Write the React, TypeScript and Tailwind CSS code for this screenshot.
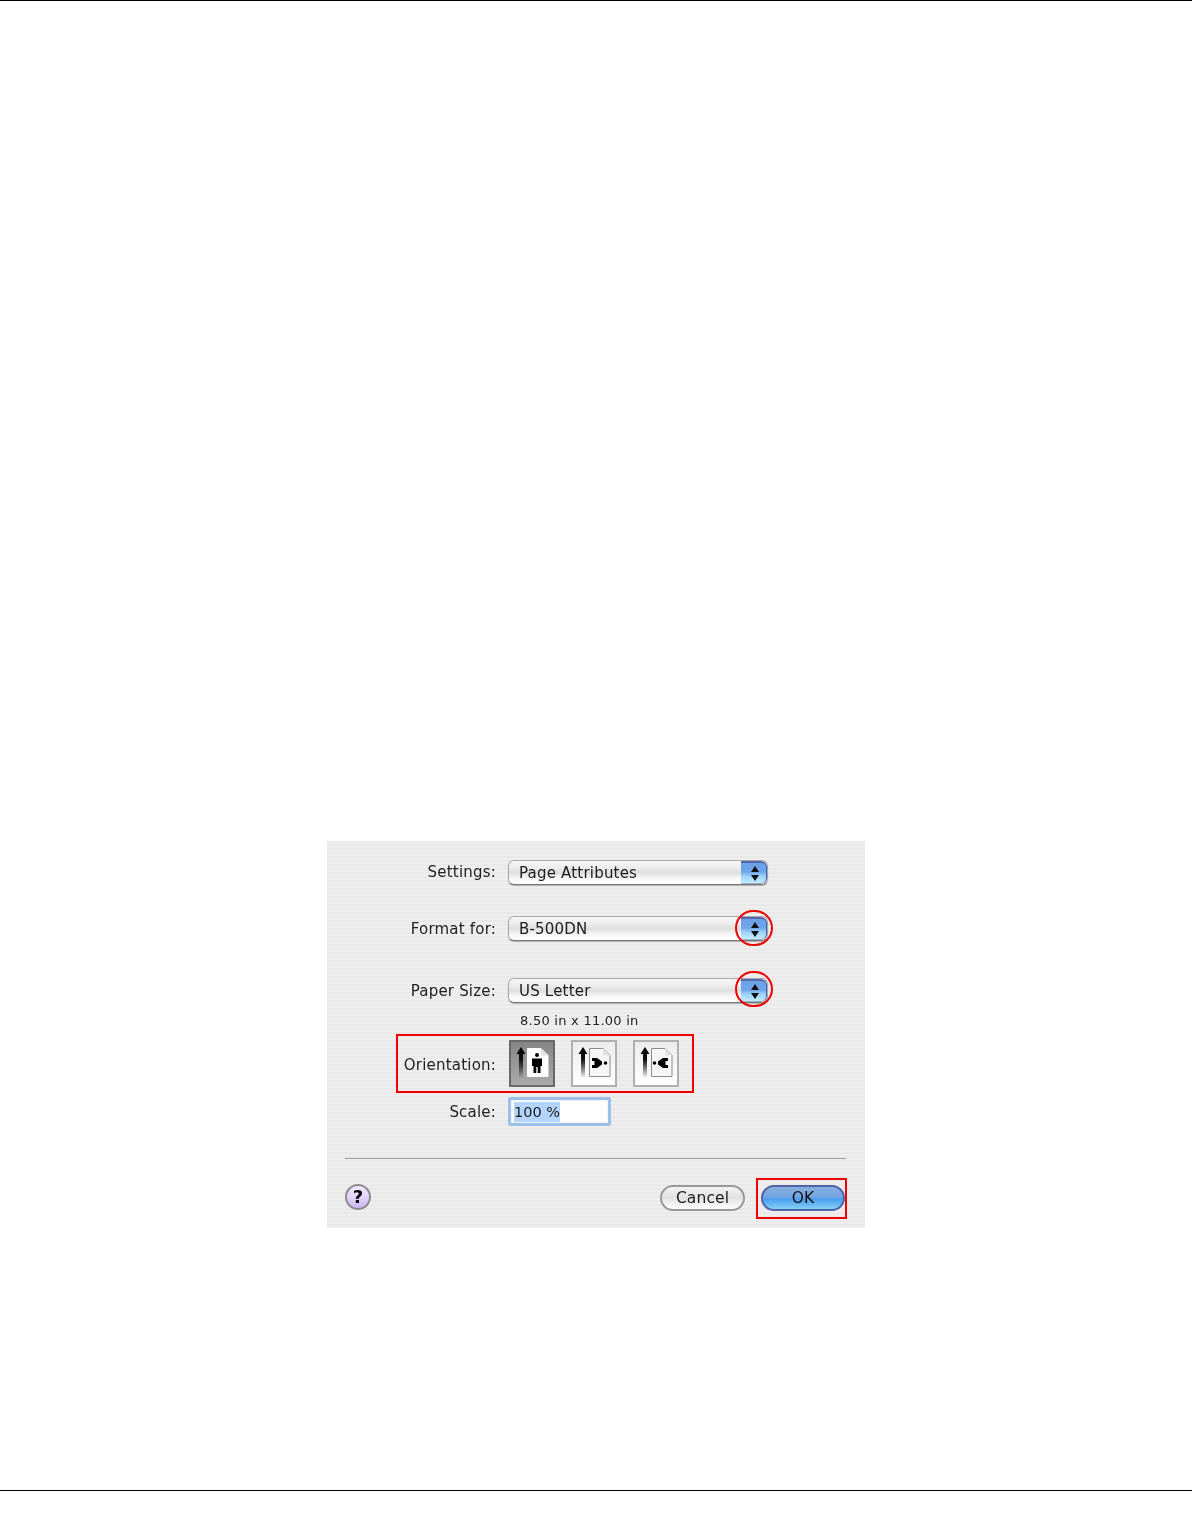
const font = "font-['DejaVu_Sans',sans-serif]";

function Stepper() {
  return (
    <div className="ml-auto flex h-full w-[26px] flex-col items-center justify-center gap-[3px] rounded-r-[6px] border-t-2 border-r border-b border-t-[#5468b0] border-r-[#3d66b8] border-b-[#9fb0c5] bg-[linear-gradient(180deg,#6fa0e6_0%,#6ea6ec_45%,#9dd2fa_65%,#c4ebff_100%)] pl-[2px]">
      <svg width="8" height="6" viewBox="0 0 8 6"><path d="M4 0 L8 6 H0 Z" fill="#111" /></svg>
      <svg width="8" height="6" viewBox="0 0 8 6"><path d="M0 0 H8 L4 6 Z" fill="#111" /></svg>
    </div>
  );
}

function Select({ value }: { value: string }) {
  return (
    <div className="flex h-[25px] w-[260px] items-center overflow-hidden rounded-[6px] border border-[#a8a8a8] border-b-[#777] bg-[linear-gradient(180deg,#f6f6f6_0%,#ececec_30%,#dedede_50%,#f6f6f6_75%,#ffffff_100%)] shadow-[0_1px_1px_rgba(0,0,0,0.25)]">
      <span className="pt-px pl-[10px] text-[15px] tracking-[0.2px] text-[#1c1c1c]">{value}</span>
      <Stepper />
    </div>
  );
}

function Row({ label, labelClass = "", children }: { label: string; labelClass?: string; children: React.ReactNode }) {
  return (
    <div className="flex items-center">
      <span className={`mr-3 w-[169px] text-right text-[15px] tracking-[0.2px] text-[#222] ${labelClass}`}>{label}</span>
      {children}
    </div>
  );
}

function OrientationIcon({ selected, dir }: { selected: boolean; dir: "up" | "right" | "left" }) {
  const gradId = `arrow-${dir}`;
  return (
    <div
      className={
        selected
          ? "h-[47px] w-[46px] border-2 border-[#6a6a6a] bg-[linear-gradient(180deg,#858585_0%,#aaaaaa_100%)]"
          : "h-[47px] w-[46px] border-2 border-[#b0b0b0] bg-[linear-gradient(180deg,#ececec_0%,#ffffff_100%)]"
      }
    >
      <svg width="42" height="43" viewBox="0 0 42 43">
        <defs>
          <linearGradient id={gradId} x1="0" y1="0" x2="0" y2="1">
            <stop offset="0" stopColor="#000" />
            <stop offset="0.4" stopColor="#111" />
            <stop offset="1" stopColor="#000" stopOpacity="0" />
          </linearGradient>
        </defs>
        <path d="M10 5 L14.5 12 H12 V36 H8 V12 H5.5 Z" fill={`url(#${gradId})`} />
        <path
          d="M16.5 6.5 H30 L37 13.5 V34.5 H16.5 Z"
          fill={selected ? "#fff" : "#f6f6f6"}
          stroke={selected ? "#fff" : "#8c8c8c"}
        />
        <path d="M30 6.5 V13.5 H37 Z" fill="#e2e2e2" />
        {dir === "up" ? (
          <g>
            <circle cx="26" cy="13" r="2" fill="#000" />
            <path d="M21 16.5 H31 V24 H29.5 V31 H26.7 V25 H25.3 V31 H22.5 V24 H21 Z" fill="#000" />
          </g>
        ) : (
          <g transform={dir === "left" ? "translate(52 0) scale(-1 1)" : undefined}>
            <path d="M19 16 H24 L29 19.5 V22.5 L24 26 H19 V23 H21.5 V19 H19 Z" fill="#000" />
            <circle cx="32.5" cy="21" r="1.8" fill="#000" />
          </g>
        )}
      </svg>
    </div>
  );
}

export default function App() {
  return (
    <div className={`flex h-[1538px] flex-col bg-white ${font}`}>
      <div className="h-px bg-black" />

      <div className="relative mx-auto mt-[840px] h-[387px] w-[538px] bg-[repeating-linear-gradient(0deg,#eeeeee_0px,#eeeeee_2px,#e9e9e9_2px,#e9e9e9_4px)]">
        <div className="pt-[19px] blur-[0.5px]">
          <Row label="Settings:"><Select value="Page Attributes" /></Row>
          <div className="mt-[31px]"><Row label="Format for:" labelClass="pt-[2px]"><Select value="B-500DN" /></Row></div>
          <div className="mt-[37px]"><Row label="Paper Size:" labelClass="pt-[2px]"><Select value="US Letter" /></Row></div>
          <div className="mt-[10px] h-4 pl-[193px] text-[13px] leading-4 tracking-[0.25px] text-[#222]">8.50 in x 11.00 in</div>

          <div className="mt-[11px]">
            <Row label="Orientation:" labelClass="pt-[3px]">
              <div className="ml-px flex gap-4">
                <OrientationIcon selected dir="up" />
                <OrientationIcon selected={false} dir="right" />
                <OrientationIcon selected={false} dir="left" />
              </div>
            </Row>
          </div>

          <div className="mt-[10px]">
            <Row label="Scale:" labelClass="pt-[2px]">
              <div className="flex h-[29px] w-[103px] items-center rounded-[2px] border-[3px] border-[#9cc0e6] bg-white pl-[3px] shadow-[inset_0_0_1px_#5f8fc8]">
                <span className="bg-[#b3d4fd] text-[14.5px] leading-[20px] text-[#1c1c1c]">100 %</span>
              </div>
            </Row>
          </div>

          <div className="mr-[19px] ml-[18px] mt-8 h-px bg-[#9b9b9b]" />

          <div className="mt-[26px] flex items-center pr-5 pl-[18px]">
            <div className="-mt-[2px] flex h-[26px] w-[26px] items-center justify-center rounded-full border-2 border-[#8d8d8d] bg-[linear-gradient(180deg,#f2e8ff_0%,#e4d4fb_50%,#cdb6f2_100%)] text-[18px] font-bold leading-none text-black">?</div>
            <div className="ml-auto flex h-[26px] w-[85px] items-center justify-center rounded-full border-2 border-[#999] bg-[linear-gradient(180deg,#f2f2f2_0%,#e2e2e2_50%,#ffffff_100%)] pt-[2px] text-[15.5px] tracking-[0.1px] text-[#1c1c1c]">Cancel</div>
            <div className="ml-4 flex h-[26px] w-[84px] items-center justify-center rounded-full border-2 border-[#4f64a6] bg-[linear-gradient(180deg,#86aedf_0%,#74a4e0_45%,#4a9ff0_55%,#82d0f8_100%)] pt-[2px] text-[15.5px] text-[#111]">OK</div>
          </div>
        </div>

        {/* red annotations lying over the dialog */}
        <div className="absolute top-[69px] left-[408px] h-9 w-[38px] rounded-full border-2 border-[#ee0000]" />
        <div className="absolute top-[130px] left-[408px] h-9 w-[38px] rounded-full border-2 border-[#ee0000]" />
        <div className="absolute top-[193px] left-[69px] h-[59px] w-[298px] border-2 border-[#ee0000]" />
        <div className="absolute top-[337px] left-[429px] h-[41px] w-[91px] border-2 border-[#ee0000]" />
      </div>

      <div className="mt-[262px] h-px bg-black" />
    </div>
  );
}
